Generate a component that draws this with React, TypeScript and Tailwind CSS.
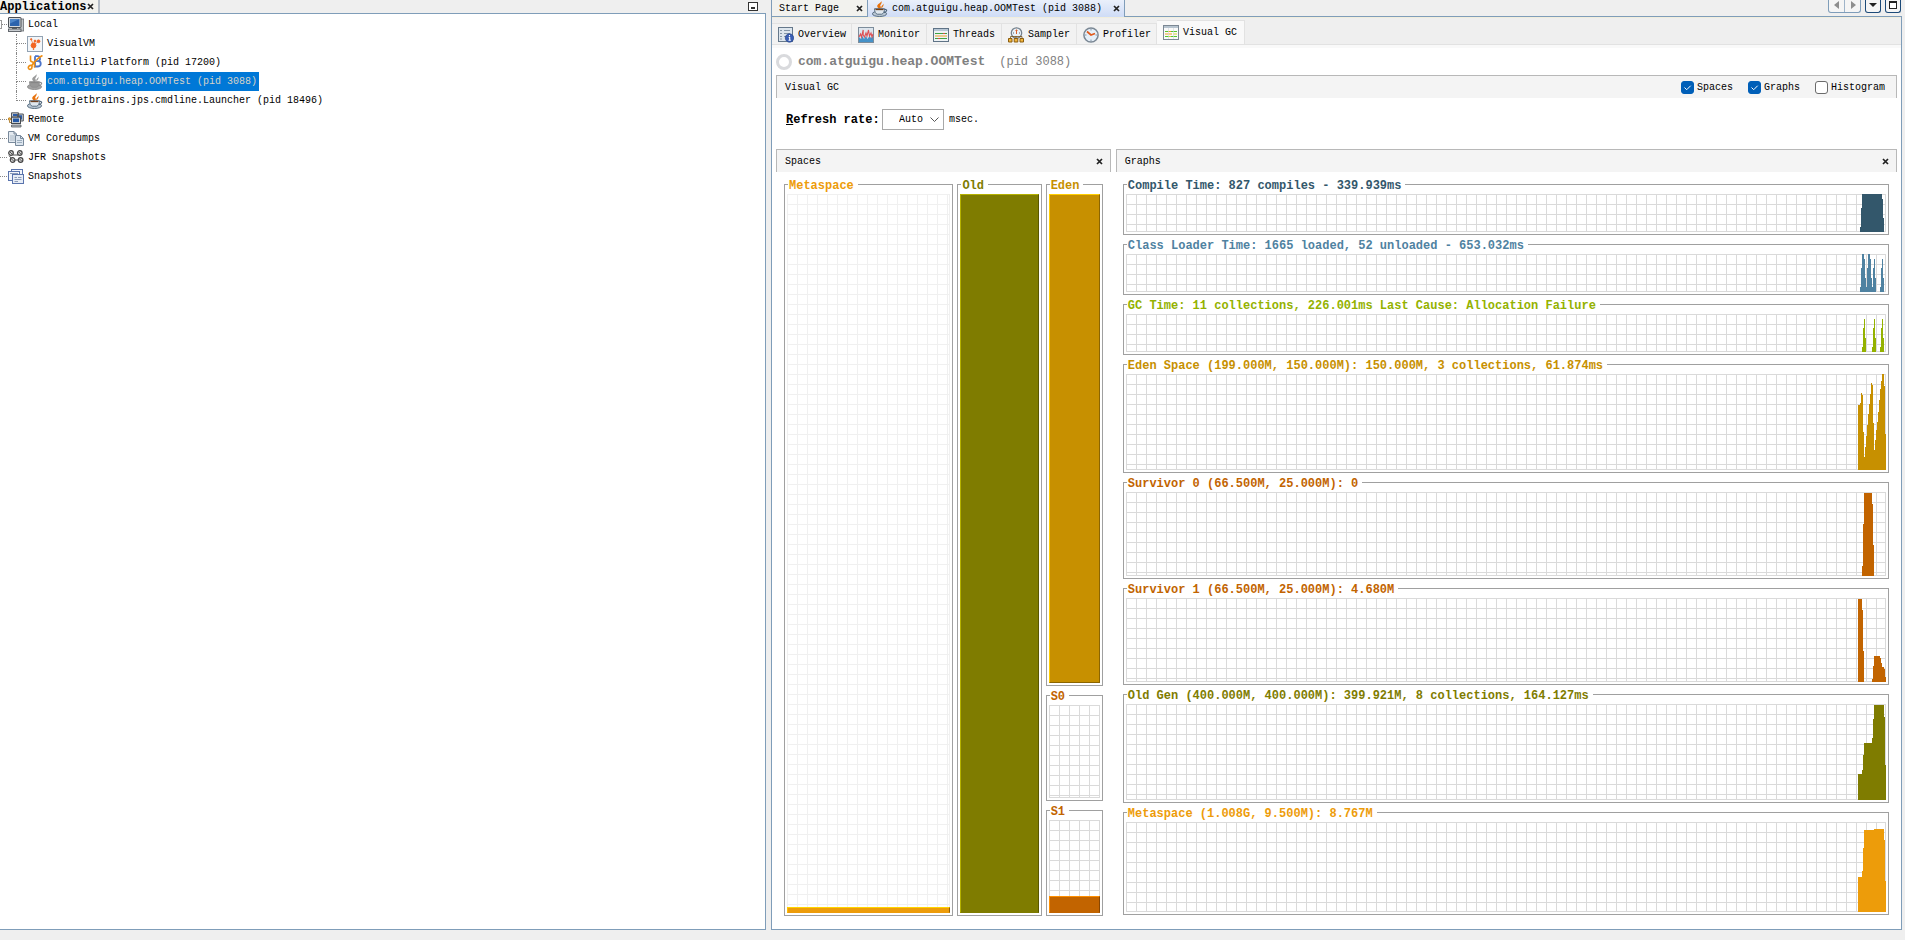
import { useState } from "react";
import type { ReactNode } from "react";
import clsx from "clsx";

/* ---------- icons ---------- */

function JavaIcon({ gray = false }: { gray?: boolean }) {
    const steam = gray ? "#9a9a9a" : "#e8720c";
    const cup = gray ? "#a3a3a3" : "#b9c6d3";
    const edge = gray ? "#8c8c8c" : "#4d6478";
    return (
        <svg width="16" height="16" viewBox="0 0 16 16" className="shrink-0" aria-hidden="true">
            <path d="M9.200 0C9.600 1.800 5 3 5.200 5.200C5.300 6.600 7 7 6.600 8.300C9.400 7.400 9.200 6 8.300 5C7.600 4 10.800 2.400 9.200 0Z" fill={steam} />
            <path d="M11.200 2.500C11.500 4.300 8.800 4.600 9.400 7.200C11 5.900 12.200 4.300 11.200 2.500Z" fill={steam} />
            <ellipse cx="7.500" cy="12.800" rx="7.100" ry="2.700" fill={cup} stroke={edge} strokeWidth="0.9" />
            <path d="M2.500 7.700H12.500C12.500 10.800 11.400 12.700 9.700 13.200H5.300C3.600 12.700 2.500 10.800 2.500 7.700Z" fill={gray ? "#979797" : "#dfe7ee"} stroke={edge} strokeWidth="0.9" />
            <path d="M12.500 8.500C15.400 8 15.600 10.800 11.800 11.600" fill="none" stroke={edge} strokeWidth="1.200" />
            <path d="M3.500 8.500H11.500" stroke={gray ? "#868686" : "#6e3f1e"} strokeWidth="1.300" />
        </svg>
    );
}

function LocalIcon() {
    return (
        <svg width="16" height="16" viewBox="0 0 16 16" className="shrink-0" aria-hidden="true">
            <rect x="11" y="2" width="4.600" height="12" fill="#c3c6c8" stroke="#6c7176" strokeWidth="0.8" />
            <rect x="0.500" y="0.500" width="12.500" height="10" rx="0.500" fill="#d5d9dc" stroke="#4a4f55" />
            <rect x="2" y="2" width="9.500" height="7" fill="#2b63ad" />
            <path d="M2 2H11.500L2 6.500Z" fill="#4d86c9" />
            <path d="M4 11H9V12.500H4Z" fill="#5c6268" />
            <rect x="0.500" y="12" width="12.500" height="2.500" fill="#c8ccd0" stroke="#555a60" strokeWidth="0.900" />
        </svg>
    );
}

function VisualVMIcon() {
    return (
        <svg width="16" height="16" viewBox="0 0 16 16" className="shrink-0" aria-hidden="true">
            <rect x="0.500" y="0.500" width="15" height="15" fill="#f3f6f9" stroke="#93a3b3" />
            <g fill="#f26522" stroke="#f26522">
                <circle cx="6.500" cy="9.500" r="2.400" />
                <circle cx="4.200" cy="3.300" r="0.700" />
                <circle cx="8" cy="5" r="0.900" />
                <circle cx="11.500" cy="5.300" r="1.400" />
                <circle cx="6.500" cy="13" r="0.500" />
                <path d="M4.200 3.300L6.500 9.500L11.500 5.300M8 5L7 9" strokeWidth="0.700" fill="none" />
            </g>
        </svg>
    );
}

function IntelliJIcon() {
    return (
        <svg width="16" height="16" viewBox="0 0 16 16" className="shrink-0" aria-hidden="true">
            <path d="M8 1.200V11.500H10.500C14.700 11.500 14.700 6.500 11.200 6.200C13.900 5.600 13.500 1.200 10.500 1.200H8M8 6.200H11" fill="none" stroke="#4c74c9" strokeWidth="1.800" />
            <path d="M3.500 0.500V5.500C4 7.500 7.500 6.500 7.500 9V12.500M15.500 0.500C11 2.500 7.500 7 4.500 10.500C2.500 10 0.800 11.500 1.500 13.300C2.500 15.300 5.500 14.500 5 10.500" fill="none" stroke="#ee8d11" strokeWidth="1.600" />
        </svg>
    );
}

function RemoteIcon() {
    return (
        <svg width="16" height="16" viewBox="0 0 16 16" className="shrink-0" aria-hidden="true">
            <path d="M3.500 0.800H10.500V5H3.500ZM9.500 2H15.300V9H9.500Z" fill="#c7cbcf" stroke="#54595f" />
            <path d="M5 2H9V4H5ZM11 3.200H14V7.500H11Z" fill="#2b5ca8" />
            <rect x="3.500" y="5.200" width="9" height="6.300" fill="#d2d6d9" stroke="#454a50" />
            <rect x="5" y="6.500" width="6" height="3.600" fill="#2358a6" />
            <path d="M3.500 13H13V15H3.500Z" fill="#b4b9be" stroke="#585d63" strokeWidth="0.800" />
            <circle cx="1.500" cy="7" r="1.300" fill="#f1b143" stroke="#a16a11" strokeWidth="0.700" />
            <path d="M1.500 8.500V10.500H3" fill="none" stroke="#a16a11" strokeWidth="0.800" />
        </svg>
    );
}

function DumpIcon() {
    return (
        <svg width="16" height="16" viewBox="0 0 16 16" className="shrink-0" aria-hidden="true">
            <path d="M0.500 0.500H6L8.500 3V11.500H0.500Z" fill="#e4eaf0" stroke="#78899b" />
            <path d="M6 0.500V3H8.500" fill="none" stroke="#78899b" />
            <path d="M2 5H7M2 7H7M2 9H7" stroke="#a9b8c6" />
            <path d="M7.500 4.500H12.500L15.500 7.500V14.500H7.500Z" fill="#dce5ee" stroke="#78899b" />
            <path d="M12.500 4.500V7.500H15.500" fill="none" stroke="#78899b" />
            <path d="M9 9.500H14M9 11.500H14" stroke="#9cadbd" />
        </svg>
    );
}

function JfrIcon() {
    return (
        <svg width="16" height="16" viewBox="0 0 16 16" className="shrink-0" aria-hidden="true">
            <g fill="#d9d9d9" stroke="#444" strokeWidth="1.200">
                <circle cx="3" cy="3" r="2.300" />
                <circle cx="11.800" cy="3" r="2.300" />
                <circle cx="4.600" cy="10" r="2.300" />
                <circle cx="12.600" cy="10" r="2.300" />
            </g>
            <path d="M2 2L4 4M10.800 2L12.800 4M3.600 9L5.600 11M11.600 9L13.600 11M5 5H10M7 10H10M1 5.500L3 8" stroke="#555" />
        </svg>
    );
}

function SnapshotsIcon() {
    return (
        <svg width="16" height="16" viewBox="0 0 16 16" className="shrink-0" aria-hidden="true">
            <rect x="3.500" y="0.500" width="11" height="8" fill="#f2f5fb" stroke="#5a74ad" />
            <rect x="0.500" y="2.500" width="11" height="9" fill="#f2f5fb" stroke="#5a74ad" />
            <rect x="4.500" y="5.500" width="11" height="9" fill="#e7edf6" stroke="#5a74ad" />
            <path d="M2 4.500H10M6.500 8.500H9M10 8.500H13.500M6.500 10.500H13.500M6.500 12.500H10" stroke="#8b9bb8" />
        </svg>
    );
}

function OverviewIcon() {
    return (
        <svg width="16" height="16" viewBox="0 0 16 16" className="shrink-0" aria-hidden="true">
            <rect x="0.500" y="0.500" width="14" height="14" fill="#dde6ee" stroke="#65788b" />
            <path d="M2 3.500H4M6 3.500H12M2 6.500H4M6 6.500H12M2 9.500H4M6 9.500H9M2 12H4" stroke="#8698a9" />
            <circle cx="11.500" cy="11" r="4.200" fill="#3a5fb4" stroke="#27458c" strokeWidth="0.700" />
            <path d="M11.500 8V9.200M10.700 10.500H11.700V13.300M10.500 13.300H12.800" stroke="#fff" strokeWidth="1.100" fill="none" />
        </svg>
    );
}

function MonitorIcon() {
    return (
        <svg width="16" height="16" viewBox="0 0 16 16" className="shrink-0" aria-hidden="true">
            <rect x="0.500" y="0.500" width="15" height="15" fill="#dde6ee" stroke="#7c8c9b" />
            <path d="M1 15V10L3 12L4.500 9L6 12L8 9L9.500 12L11.500 9L13 11L15 9V15Z" fill="#4692c8" />
            <path d="M1 10L2.500 7L3.500 10L5.200 3V8L6.500 10L8 6L9 9L10.500 3L11.500 9L13 6L14 10L15 7" fill="none" stroke="#dd5256" strokeWidth="1.100" />
        </svg>
    );
}

function ThreadsIcon() {
    return (
        <svg width="16" height="16" viewBox="0 0 16 16" className="shrink-0" aria-hidden="true">
            <rect x="0.500" y="1.500" width="15" height="13" fill="#eef2f5" stroke="#5f7386" />
            <rect x="1" y="2" width="14" height="2" fill="#b8c7d5" />
            <path d="M2 6.500H14" stroke="#40a443" />
            <path d="M2 9H14" stroke="#eba22a" />
            <path d="M2 11.500H14" stroke="#40a443" />
            <path d="M5 11.500H7M10 6.500H12" stroke="#d94f3c" />
        </svg>
    );
}

function SamplerIcon() {
    return (
        <svg width="16" height="16" viewBox="0 0 16 16" className="shrink-0" aria-hidden="true">
            <circle cx="8.500" cy="6" r="5.200" fill="#eaf1f7" stroke="#74808c" strokeWidth="1.300" />
            <path d="M8.500 2.500V7M7.500 3.500H9.500" stroke="#d8602c" />
            <path d="M5 6H6M11 6H12" stroke="#567" />
            <path d="M2.500 11V9.500H14V11M8 9V11" fill="none" stroke="#77531a" strokeWidth="0.800" />
            <path d="M0.500 11.500H4V15H0.500ZM6.200 11.500H9.800V15H6.200ZM12 11.500H15.500V15H12Z" fill="#f2b53c" stroke="#8a5c0e" />
        </svg>
    );
}

function ProfilerIcon() {
    return (
        <svg width="16" height="16" viewBox="0 0 16 16" className="shrink-0" aria-hidden="true">
            <circle cx="8" cy="8" r="7.100" fill="#e5eff8" stroke="#7a8794" strokeWidth="1.500" />
            <path d="M8 2V3.500M8 12.500V14M2 8H3.500M12.500 8H14" stroke="#8496a7" />
            <path d="M4 4.500L8 8L12 6.500" fill="none" stroke="#e05a1c" strokeWidth="1.700" />
        </svg>
    );
}

function VisualGCIcon() {
    return (
        <svg width="16" height="16" viewBox="0 0 16 16" className="shrink-0" aria-hidden="true">
            <rect x="0.500" y="0.500" width="15" height="14" fill="#fafafa" stroke="#7b8793" />
            <path d="M1 2H15" stroke="#b7c4cf" strokeWidth="2" />
            <path d="M2 6.500H5M8 6.500H14M2 11.500H14" stroke="#54c52e" />
            <path d="M5 6.500H8M2 9H9" stroke="#f0a020" />
            <path d="M10 9H14M6 11.500H8" stroke="#d6d62a" />
            <path d="M5.500 3V14M10.500 3V14" stroke="#d3d9de" strokeWidth="0.600" />
        </svg>
    );
}

function CloseIcon() {
    return (
        <svg width="7" height="7" viewBox="0 0 7 7" className="shrink-0" aria-hidden="true">
            <path d="M1 1L6 6M6 1L1 6" stroke="#222" strokeWidth="1.700" />
        </svg>
    );
}

/* ---------- data ---------- */

const processes = [
    { name: "VisualVM", icon: <VisualVMIcon /> },
    { name: "IntelliJ Platform (pid 17200)", icon: <IntelliJIcon /> },
    { name: "com.atguigu.heap.OOMTest (pid 3088)", icon: <JavaIcon gray /> },
    { name: "org.jetbrains.jps.cmdline.Launcher (pid 18496)", icon: <JavaIcon /> },
];

const roots = [
    { name: "Remote", icon: <RemoteIcon /> },
    { name: "VM Coredumps", icon: <DumpIcon /> },
    { name: "JFR Snapshots", icon: <JfrIcon /> },
    { name: "Snapshots", icon: <SnapshotsIcon /> },
];

const views = [
    { name: "Overview", icon: <OverviewIcon />, width: "w-20" },
    { name: "Monitor", icon: <MonitorIcon />, width: "w-[75px]" },
    { name: "Threads", icon: <ThreadsIcon />, width: "w-[75px]" },
    { name: "Sampler", icon: <SamplerIcon />, width: "w-[75px]" },
    { name: "Profiler", icon: <ProfilerIcon />, width: "w-20" },
    { name: "Visual GC", icon: <VisualGCIcon />, width: "w-[88px]" },
];

// d is the filled history, drawn in a 28px wide strip of the given height
const graphs = [
    {
        title: "Compile Time: 827 compiles - 339.939ms",
        text: "text-[#33576b]",
        fill: "fill-[#33576b]",
        height: 38,
        d: "M2 38V33H3V14H4V0H24V5H25V24H26V38Z",
    },
    {
        title: "Class Loader Time: 1665 loaded, 52 unloaded - 653.032ms",
        text: "text-[#4f82a1]",
        fill: "fill-[#4f82a1]",
        height: 38,
        d: "M2 38V33H3V14H4V0H6V5H7V24H8V33H9V14H10V0H12V5H13V24H14V33H15V14H16V5H17V24H18V38Z M22 38V33H23V14H24V5H25V24H26V38Z",
    },
    {
        title: "GC Time: 11 collections, 226.001ms Last Cause: Allocation Failure",
        text: "text-[#94b200]",
        fill: "fill-[#94b200]",
        height: 38,
        d: "M4 38V33H5V14H6V5H7V24H8V38Z M14 38V33H15V14H16V5H17V24H18V38Z M22 38V33H23V14H24V5H25V24H26V38Z",
    },
    {
        title: "Eden Space (199.000M, 150.000M): 150.000M, 3 collections, 61.874ms",
        text: "text-[#c79000]",
        fill: "fill-[#c79000]",
        height: 96,
        d: "M0 96V31H2V29H3V19H4V21H5V58H6V83H7V73H8V62H9V51H10V40H11V30H12V20H13V9H14V11H15V49H16V76H17V66H18V56H19V48H20V38H21V26H22V15H23V7H24V0H26V12H27V60H28V96Z",
    },
    {
        title: "Survivor 0 (66.500M, 25.000M): 0",
        text: "text-[#c26400]",
        fill: "fill-[#c26400]",
        height: 84,
        d: "M4 84V74H5V32H6V1H14V12H15V53H16V84Z",
    },
    {
        title: "Survivor 1 (66.500M, 25.000M): 4.680M",
        text: "text-[#c26400]",
        fill: "fill-[#c26400]",
        height: 84,
        d: "M0 84V1H4V12H5V53H6V84Z M14 84V81H15V68H16V58H22V60H23V65H24V69H26V71H27V79H28V84Z",
    },
    {
        title: "Old Gen (400.000M, 400.000M): 399.921M, 8 collections, 164.127ms",
        text: "text-[#7f7c00]",
        fill: "fill-[#7f7c00]",
        height: 96,
        d: "M0 96V70H4V66H5V51H6V39H14V34H15V15H16V1H26V13H27V61H28V96Z",
    },
    {
        title: "Metaspace (1.008G, 9.500M): 8.767M",
        text: "text-[#ed9c0a]",
        fill: "fill-[#ed9c0a]",
        height: 90,
        d: "M0 90V55H4V49H5V26H6V8H16V7H26V18H27V59H28V90Z",
    },
];

/* ---------- building blocks ---------- */

interface TitledBoxProps {
    title: string;
    color: string;
    faint?: boolean;
    className?: string;
    children?: ReactNode;
}

// Titled border with the squared paper inside it
function TitledBox({ title, color, faint, className, children }: TitledBoxProps) {
    return (
        <section className={clsx("relative flex min-h-0 min-w-0 border border-[#a0a0a0] px-[2px] pt-[9px] pb-[2px]", className)}>
            <h3 className={clsx("absolute -top-[7px] left-[3px] bg-white pr-1 pl-px text-[12px] leading-4 font-bold whitespace-nowrap", color)}>
                {title}
            </h3>
            <div
                className={clsx(
                    "relative flex min-w-0 flex-1 items-end justify-end bg-[size:10px_10px]",
                    faint
                        ? "bg-[linear-gradient(to_right,#f0f0f0_1px,transparent_1px),linear-gradient(to_bottom,#f0f0f0_1px,transparent_1px)] shadow-[inset_-1px_-1px_0_#f0f0f0]"
                        : "bg-[linear-gradient(to_right,#dadada_1px,transparent_1px),linear-gradient(to_bottom,#dadada_1px,transparent_1px)] shadow-[inset_-1px_-1px_0_#dadada]"
                )}
            >
                {children}
            </div>
        </section>
    );
}

function SpaceFill({ percent, className }: { percent: number; className: string }) {
    return <div className={clsx("w-full border", className)} style={{ height: `${percent}%` }} />;
}

function PanelHeader({ title, children }: { title: string; children: ReactNode }) {
    return (
        <header className="flex h-[23px] items-center justify-between border border-b-0 border-[#b8b8b8] bg-[#f4f4f4] pt-px pr-[7px] pl-2">
            <h2>{title}</h2>
            {children}
        </header>
    );
}

function Toggle({ label, initial }: { label: string; initial: boolean }) {
    const [checked, setChecked] = useState(initial);
    return (
        <label className="flex items-center gap-[3px]">
            <span className="relative flex">
                <input
                    type="checkbox"
                    checked={checked}
                    onChange={(e) => setChecked(e.target.checked)}
                    className="size-[13px] appearance-none rounded-[3px] border border-[#6b6b6b] bg-white checked:border-[#005fb8] checked:bg-[#005fb8]"
                />
                {checked && (
                    <svg viewBox="0 0 13 13" className="pointer-events-none absolute inset-0 size-[13px]" aria-hidden="true">
                        <path d="M3.500 6.500L5.700 8.700L9.700 4.700" fill="none" stroke="#fff" />
                    </svg>
                )}
            </span>
            {label}
        </label>
    );
}

/* ---------- panes ---------- */

function ApplicationsPane() {
    const [selected, setSelected] = useState(2);

    return (
        <aside className="flex min-h-0 min-w-0 flex-col">
            <div className="flex h-[13px] items-center justify-between pr-2">
                <div className="flex h-full w-[100px] items-center justify-between border-r-2 border-[#b4bcc6] bg-[#f2f2ee] pr-1">
                    <h2 className="pt-[2px] text-[12px] leading-[13px] font-bold">Applications</h2>
                    <button type="button" aria-label="Close Applications">
                        <CloseIcon />
                    </button>
                </div>
                <button type="button" aria-label="Minimize" className="mb-px h-[9px] w-[10px] border border-[#333] bg-white px-[2px] pt-[3px]">
                    <span className="block h-[2px] bg-[#333]" />
                </button>
            </div>
            <nav className="flex-1 overflow-hidden border-t border-r border-b border-[#7f9db9] bg-white pt-px">
                <ul>
                    <li>
                        <div className="flex h-[19px] items-center">
                            <span className="h-[9px] w-[2px] border border-l-0 border-[#999]" />
                            <span className="mr-px w-[5px] border-b border-dotted border-[#888]" />
                            <LocalIcon />
                            <span className="ml-1">Local</span>
                        </div>
                        <ul className="ml-4">
                            {processes.map((p, i) => (
                                <li key={p.name} className="flex h-[19px] items-center">
                                    <span className="mr-px flex h-full w-[10px] flex-col">
                                        <span className="h-[10px] border-b border-l border-dotted border-[#888]" />
                                        {i < processes.length - 1 && <span className="flex-1 border-l border-dotted border-[#888]" />}
                                    </span>
                                    {p.icon}
                                    <button
                                        type="button"
                                        onClick={() => setSelected(i)}
                                        className={clsx("ml-[3px] h-full pr-[2px] pl-px", i === selected && "bg-[#0078d7] text-[#d6d3c8]")}
                                    >
                                        {p.name}
                                    </button>
                                </li>
                            ))}
                        </ul>
                    </li>
                    {roots.map((r) => (
                        <li key={r.name} className="flex h-[19px] items-center">
                            <span className="mr-px w-[7px] border-b border-dotted border-[#888]" />
                            {r.icon}
                            <span className="ml-1">{r.name}</span>
                        </li>
                    ))}
                </ul>
            </nav>
        </aside>
    );
}

function DocumentTabs() {
    return (
        <div className="flex h-[17px] items-start justify-between">
            <div className="flex h-full min-w-0 flex-1">
                <div className="flex h-full w-[97px] items-center justify-between border-r border-b border-l border-[#7f9db9] bg-[#f2f2ee] pt-px pr-1 pl-[7px]">
                    <a href="#start">Start Page</a>
                    <button type="button" aria-label="Close Start Page">
                        <CloseIcon />
                    </button>
                </div>
                <div className="flex h-full w-[257px] items-center border-r border-[#7f9db9] bg-linear-to-b from-[#eaf0fb] to-[#cfdcf6] pr-1 pl-1">
                    <JavaIcon />
                    <a href="#oomtest" className="ml-[4px] flex-1">
                        com.atguigu.heap.OOMTest (pid 3088)
                    </a>
                    <button type="button" aria-label="Close com.atguigu.heap.OOMTest">
                        <CloseIcon />
                    </button>
                </div>
                <div className="flex-1 border-b border-[#7f9db9]" />
            </div>
            <div className="flex h-full gap-1 border-b border-[#7f9db9] pr-px">
                <div className="flex h-[13px] divide-x divide-[#9fb4c9] rounded-b-[3px] border border-t-0 border-[#7f9db9] bg-[#f5f5f5]">
                    <button type="button" aria-label="Scroll tabs left" className="flex w-4 justify-center">
                        <svg width="6" height="10" viewBox="0 0 6 10" aria-hidden="true">
                            <path d="M5 1V9L0 5Z" fill="#8e8e8e" />
                        </svg>
                    </button>
                    <button type="button" aria-label="Scroll tabs right" className="flex w-[15px] justify-center">
                        <svg width="6" height="10" viewBox="0 0 6 10" aria-hidden="true">
                            <path d="M1 1V9L6 5Z" fill="#8e8e8e" />
                        </svg>
                    </button>
                </div>
                <button type="button" aria-label="Show opened documents" className="flex h-[13px] w-4 justify-center rounded-b-[3px] border border-t-0 border-[#1c4a78] bg-[#f5f5f5]">
                    <svg width="10" height="10" viewBox="0 0 10 10" aria-hidden="true">
                        <path d="M1 3H9L5 7Z" fill="#222" />
                    </svg>
                </button>
                <button type="button" aria-label="Maximize window" className="flex h-[13px] w-4 justify-center rounded-b-[3px] border border-t-0 border-[#1c4a78] bg-[#f5f5f5]">
                    <span className="mt-px size-2 border border-t-2 border-[#222] bg-white" />
                </button>
            </div>
        </div>
    );
}

function ViewTabs() {
    const [active, setActive] = useState("Visual GC");
    return (
        <div className="h-[31px] border-t border-[#f1eedd] bg-[#efefef] pt-[3px]">
            <div role="tablist" className="flex h-6 items-end border-b border-[#e2e2e2]">
                {views.map((v) => (
                    <button
                        key={v.name}
                        type="button"
                        role="tab"
                        aria-selected={v.name === active}
                        onClick={() => setActive(v.name)}
                        className={clsx(
                            "flex items-center gap-1 border-t border-r border-[#e2e2e2] pl-[6px]",
                            v.width,
                            v.name === active ? "h-6 bg-[#f9f9f9]" : "h-[21px] bg-[#f2f2f2] pt-[2px]"
                        )}
                    >
                        {v.icon}
                        {v.name}
                    </button>
                ))}
            </div>
            <div className="h-[3px] bg-[#f9f9f9]" />
        </div>
    );
}

function SpacesPanel() {
    return (
        <section className="flex min-h-0 min-w-0 flex-col">
            <PanelHeader title="Spaces">
                <button type="button" aria-label="Close Spaces">
                    <CloseIcon />
                </button>
            </PanelHeader>
            <div className="grid min-h-0 flex-1 grid-cols-[169fr_84fr_57fr] gap-1 px-2 pt-3 pb-[13px]">
                <TitledBox title="Metaspace" color="text-[#ed9c0a]" faint>
                    <div className="h-[6px] w-full border border-t-[#ffd500] border-r-[#8f5e06] border-b-[#ed9c0a] border-l-[#ffc400] bg-[#ed9c0a]" />
                </TitledBox>
                <TitledBox title="Old" color="text-[#7f7c00]">
                    <SpaceFill percent={100} className="border-t-[#b5b100] border-r-[#595700] border-b-[#7f7c00] border-l-[#b5b100] bg-[#7f7c00]" />
                </TitledBox>
                <div className="grid min-h-0 grid-rows-[501fr_106fr_106fr] gap-[9px]">
                    <TitledBox title="Eden" color="text-[#c79000]">
                        <SpaceFill percent={100} className="border-t-[#ffce00] border-r-[#8b6500] border-b-[#8b6500] border-l-[#ffce00] bg-[#c79000]" />
                    </TitledBox>
                    <TitledBox title="S0" color="text-[#c26400]" />
                    <TitledBox title="S1" color="text-[#c26400]">
                        <SpaceFill percent={18} className="border-t-[#ff8f00] border-r-[#884600] border-b-[#c26400] border-l-[#ff8f00] bg-[#c26400]" />
                    </TitledBox>
                </div>
            </div>
        </section>
    );
}

function GraphsPanel() {
    return (
        <section className="flex min-h-0 min-w-0 flex-col">
            <PanelHeader title="Graphs">
                <button type="button" aria-label="Close Graphs">
                    <CloseIcon />
                </button>
            </PanelHeader>
            <div className="grid min-h-0 flex-1 grid-rows-[51px_51px_51px_109fr_97fr_97fr_109fr_103fr] gap-[9px] pt-3 pr-2 pb-[14px] pl-[7px]">
                {graphs.map((g) => (
                    <TitledBox key={g.title} title={g.title} color={g.text}>
                        <svg
                            viewBox={`0 0 28 ${g.height}`}
                            preserveAspectRatio="none"
                            shapeRendering="crispEdges"
                            className="h-full w-7"
                            aria-hidden="true"
                        >
                            <path d={g.d} className={g.fill} />
                        </svg>
                    </TitledBox>
                ))}
            </div>
        </section>
    );
}

function DocumentPane() {
    const [rate, setRate] = useState("Auto");

    return (
        <main className="flex min-h-0 min-w-0 flex-col">
            <DocumentTabs />
            <div className="flex min-h-0 flex-1 flex-col border-r border-b border-l border-[#7f9db9] bg-white">
                <ViewTabs />
                <div className="flex min-h-0 flex-1 flex-col px-1">
                    <div className="flex h-[27px] items-center gap-[6px] pt-px text-[#808080]">
                        <span className="size-4 rounded-full border-3 border-[#d9dadd]" />
                        <h1 className="text-[13px] font-bold">com.atguigu.heap.OOMTest</h1>
                        <span className="ml-2 text-[12px]">(pid 3088)</span>
                    </div>
                    <PanelHeader title="Visual GC">
                        <div className="flex gap-[15px] pr-1">
                            <Toggle label="Spaces" initial={true} />
                            <Toggle label="Graphs" initial={true} />
                            <Toggle label="Histogram" initial={false} />
                        </div>
                    </PanelHeader>
                    <div className="flex h-[51px] items-center pb-2 pl-[10px]">
                        <label htmlFor="refresh-rate" className="w-24 text-[12px] font-bold whitespace-nowrap">
                            <span className="underline">R</span>efresh rate:
                        </label>
                        <span className="relative mr-[5px]">
                            <select
                                id="refresh-rate"
                                value={rate}
                                onChange={(e) => setRate(e.target.value)}
                                className="block h-[21px] w-[62px] appearance-none border border-[#a8a8a8] bg-white pl-4"
                            >
                                <option>Auto</option>
                                <option>100</option>
                                <option>200</option>
                                <option>500</option>
                            </select>
                            <svg width="9" height="6" viewBox="0 0 9 6" className="pointer-events-none absolute top-2 right-[5px]" aria-hidden="true">
                                <path d="M0.500 0.500L4.500 4.500L8.500 0.500" fill="none" stroke="#555" />
                            </svg>
                        </span>
                        msec.
                    </div>
                    <div className="grid min-h-0 flex-1 grid-cols-[3fr_7fr] gap-[5px]">
                        <SpacesPanel />
                        <GraphsPanel />
                    </div>
                </div>
            </div>
        </main>
    );
}

export default function App() {
    return (
        <div className="grid h-screen min-h-[720px] grid-cols-[766fr_1131fr] gap-[5px] overflow-hidden bg-[#efefef] pr-[3px] pb-[10px] font-['Liberation_Mono','Courier_New',monospace] text-[10px] leading-[14px] text-black">
            <ApplicationsPane />
            <DocumentPane />
        </div>
    );
}
